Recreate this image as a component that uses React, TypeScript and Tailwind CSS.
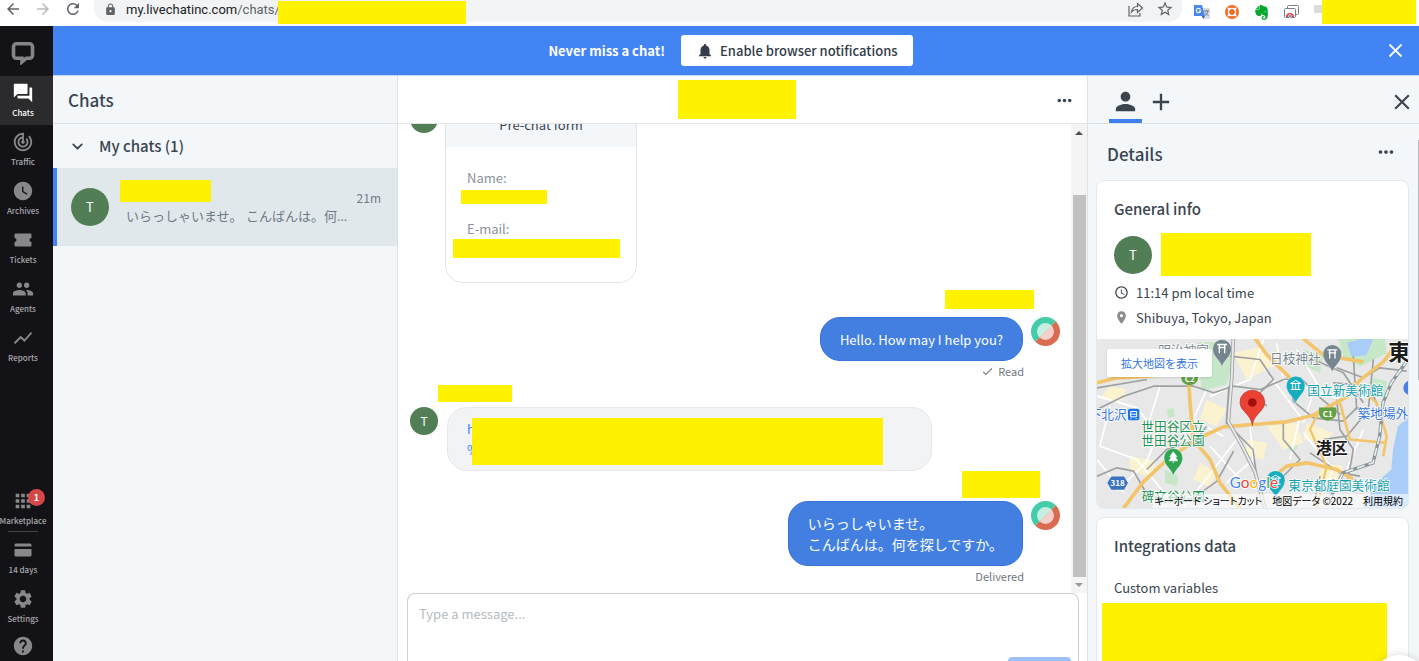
import type { ReactNode } from "react";
import type { IconType } from "react-icons";
import {
  MdAccessTime,
  MdAdd,
  MdApps,
  MdArrowBack,
  MdArrowForward,
  MdCheck,
  MdClose,
  MdForum,
  MdGroup,
  MdHelp,
  MdLocationOn,
  MdLock,
  MdMoreHoriz,
  MdNotifications,
  MdPerson,
  MdRefresh,
  MdSettings,
  MdShowChart,
  MdStarBorder,
  MdTrackChanges,
  MdWatchLater,
} from "react-icons/md";
import { SiEvernote } from "react-icons/si";
import { ChevronDown } from "lucide-react";
import clsx from "clsx";

const Redacted = ({ className }: { className: string }) => (
  <span aria-hidden="true" className={clsx("block shrink-0 bg-[#fff200]", className)} />
);

const Initial = ({ className }: { className: string }) => (
  <span
    className={clsx(
      "flex shrink-0 items-center justify-center rounded-full bg-[#517e55] text-white",
      className
    )}
  >
    T
  </span>
);

function BrowserBar() {
  return (
    <header className="flex h-[26px] shrink-0 items-start bg-white text-[#5f6368]">
      <div className="flex w-[94px] shrink-0 items-center gap-3 pl-1">
        <button type="button" aria-label="Back"><MdArrowBack size={18} /></button>
        <button type="button" aria-label="Forward" className="text-[#b9bbbe]">
          <MdArrowForward size={18} />
        </button>
        <button type="button" aria-label="Reload"><MdRefresh size={18} /></button>
      </div>
      <div className="flex h-[22px] min-w-0 flex-1 items-start rounded-b-[14px] bg-[#f1f3f4] pl-[10px]">
        <MdLock size={13} className="mt-[3px] shrink-0" />
        <p className="ml-[9px] w-[152px] shrink-0 overflow-hidden font-['Roboto',sans-serif] text-[13px] leading-[19px] whitespace-nowrap">
          <span className="text-[#202124]">my.livechatinc.com</span>/chats/
        </p>
        <Redacted className="mt-px h-[23px] w-[188px]" />
        <div className="ml-auto flex gap-3 pr-2">
          <button type="button" aria-label="Share">
            <svg width="18" height="18" viewBox="0 0 18 18" fill="none" stroke="currentColor" strokeWidth="1.2">
              <path d="M3 6v10h11v-3M5.500 12c.5-4 3-5.500 6-5.500V3.500L16.500 8l-5 4.500v-3c-2.500 0-4.500.5-6 2.500z" />
            </svg>
          </button>
          <button type="button" aria-label="Bookmark"><MdStarBorder size={18} /></button>
        </div>
      </div>
      <div className="flex shrink-0 items-center gap-[15px] pr-[3px] pl-3">
        <svg width="16" height="18" viewBox="0 0 16 18">
          <path d="M6 5h10v11H9z" fill="#dadce0" />
          <path d="M0 2h8l3 11H0z" fill="#4a86ec" />
          <path d="M8 13h3l-2 3z" fill="#2b5bc4" />
          <path d="M10 8h5M12.500 7v1M14 8c-.5 2-2 4-3 4.500M11.500 9.500c.5 1 2 2.500 3 3" stroke="#607d8b" fill="none" />
          <path d="M6.500 6.500A2.200 2.200 0 1 0 6.700 8H4.800" stroke="#fff" strokeWidth="1.100" fill="none" />
        </svg>
        <svg width="14" height="18" viewBox="0 0 14 18">
          <circle cx="7" cy="9" r="7" fill="#f26b26" />
          <circle cx="7" cy="9" r="3.600" fill="none" stroke="#fff" strokeWidth="1.300" />
          <path d="M3 5l2 2M11 5L9 7M3 13l2-2M11 13l-2-2" stroke="#fff" strokeWidth="1.800" />
          <circle cx="7" cy="9" r="2.200" fill="#f26b26" />
        </svg>
        <SiEvernote size={15} className="text-[#00a82d]" />
        <svg width="15" height="18" viewBox="0 0 15 18" fill="#fff" stroke="#7b7f83">
          <rect x="3.500" y="2.500" width="11" height="9" rx="1" />
          <rect x=".5" y="5.500" width="11" height="9" rx="1" />
          <path d="M2 14a4 4 0 0 1 8 0z" fill="#ea4335" stroke="none" />
          <circle cx="6" cy="13" r="1.500" fill="#4285f4" stroke="#fff" strokeWidth=".6" />
        </svg>
        <div className="flex">
          <span className="mt-[5px] h-2 w-2 bg-[#dcdcdc]" />
          <Redacted className="h-6 w-[94px]" />
        </div>
      </div>
    </header>
  );
}

const TicketIcon = () => (
  <svg width="18" height="18" viewBox="0 0 18 18" fill="currentColor">
    <path d="M1.500 2.500h15a1 1 0 0 1 1 1V7a2 2 0 0 0 0 4v3.500a1 1 0 0 1-1 1h-15a1 1 0 0 1-1-1V11a2 2 0 0 0 0-4V3.500a1 1 0 0 1 1-1z" />
  </svg>
);

const CardIcon = () => (
  <svg width="18" height="18" viewBox="0 0 18 18" fill="currentColor">
    <path d="M2 2.500h14a1.500 1.500 0 0 1 1.500 1.500v1.500H.5V4A1.500 1.500 0 0 1 2 2.500zM.5 8h17v6a1.500 1.500 0 0 1-1.500 1.500H2A1.500 1.500 0 0 1 .5 14z" />
  </svg>
);

function NavItem({
  label,
  icon: Icon,
  active,
  badge,
}: {
  label: string;
  icon: IconType | (() => ReactNode);
  active?: boolean;
  badge?: string;
}) {
  return (
    <a
      href="#"
      className={clsx(
        "flex h-[49px] w-full shrink-0 flex-col items-center gap-[2px] pt-[6px] pr-[7px] text-[8px] leading-[14px] font-medium whitespace-nowrap",
        active ? "bg-[#2b2b2d] text-white" : "text-[#a9a9ab]"
      )}
    >
      <span
        className={clsx(
          "relative flex size-[22px] shrink-0 items-center justify-center",
          active ? "text-white" : "text-[#88888a]"
        )}
      >
        <Icon size={22} />
        {badge && (
          <span className="absolute -top-px left-4 flex size-[17px] items-center justify-center rounded-full bg-[#d64646] text-[9px] font-bold text-white">
            {badge}
          </span>
        )}
      </span>
      {label}
    </a>
  );
}

function Sidebar() {
  return (
    <nav className="flex w-[53px] shrink-0 flex-col overflow-hidden bg-[#131217]">
      <a href="#" aria-label="LiveChat" className="flex h-[50px] shrink-0 items-center justify-center pr-[7px] pt-1">
        <svg width="24" height="24" viewBox="0 0 24 24" fill="none" stroke="#858587" strokeWidth="3.600">
          <path d="M5.500 2.800h13a3 3 0 0 1 3 3v8.500a3 3 0 0 1-3 3h-3.300l-4.200 3.500v-3.500H5.500a3 3 0 0 1-3-3V5.800a3 3 0 0 1 3-3z" />
        </svg>
      </a>
      <NavItem label="Chats" icon={MdForum} active />
      <NavItem label="Traffic" icon={MdTrackChanges} />
      <NavItem label="Archives" icon={MdWatchLater} />
      <NavItem label="Tickets" icon={TicketIcon} />
      <NavItem label="Agents" icon={MdGroup} />
      <NavItem label="Reports" icon={MdShowChart} />
      <div className="mt-auto">
        <NavItem label="Marketplace" icon={MdApps} badge="1" />
        <hr className="-mt-[2px] mb-px ml-2 w-[30px] border-[#444447]" />
        <NavItem label="14 days" icon={CardIcon} />
        <NavItem label="Settings" icon={MdSettings} />
        <a href="#" aria-label="Help" className="flex h-[30px] justify-center pt-1 pr-[7px] text-[#88888a]">
          <MdHelp size={22} />
        </a>
      </div>
    </nav>
  );
}

function Banner() {
  return (
    <div className="flex h-[50px] shrink-0 items-center border-b border-[#c3d8fd] bg-[#4384f5] pr-3 pl-6 text-white">
      <div className="flex flex-1 items-center justify-center gap-4">
        <strong className="text-[13px] leading-5 font-bold">Never miss a chat!</strong>
        <button
          type="button"
          className="flex h-[31px] items-center gap-[6px] rounded-[3px] bg-white px-[15px] text-[13px] font-medium text-[#333c48]"
        >
          <MdNotifications size={18} />
          Enable browser notifications
        </button>
      </div>
      <button type="button" aria-label="Dismiss"><MdClose size={23} /></button>
    </div>
  );
}

function ChatList() {
  return (
    <section className="flex w-[345px] shrink-0 flex-col border-r border-[#dde2e7] bg-[#f3f7fa]">
      <h1 className="flex h-12 shrink-0 items-center border-b border-[#dde2e7] pl-[15px] text-[17px] font-medium">
        Chats
      </h1>
      <button type="button" className="flex h-11 shrink-0 items-center gap-[13px] pl-4 text-[15px] font-medium">
        <ChevronDown size={17} strokeWidth={2.5} />
        My chats (1)
      </button>
      <a href="#" className="flex h-[78px] items-center border-l-4 border-[#4384f5] bg-[#e1e8eb] pr-4 pl-[14px]">
        <Initial className="size-[38px] text-[13px]" />
        <div className="ml-[11px] min-w-0 flex-1 pb-2">
          <div className="flex h-[26px] justify-between">
            <Redacted className="h-[22px] w-[91px]" />
            <time className="self-end text-xs leading-4 text-[#6f7b87]">21m</time>
          </div>
          <p className="mr-[26px] truncate pl-[6px] font-['Open_Sans','Noto_Sans_CJK_JP',sans-serif] text-[13px] leading-5 text-[#6f7b87]">
            いらっしゃいませ。 こんばんは。何を探しですか。
          </p>
        </div>
      </a>
    </section>
  );
}

const AgentAvatar = () => (
  <svg width="29" height="29" viewBox="0 0 29 29" className="shrink-0">
    <g transform="rotate(-45 14.500 14.500)">
      <path d="M0 14.500a14.500 14.500 0 0 1 29 0z" fill="#43cbaa" />
      <path d="M0 14.500a14.500 14.500 0 0 0 29 0z" fill="#d96c50" />
      <path d="M6 14.500a8.500 8.500 0 0 1 17 0z" fill="#c5efe3" />
      <path d="M6 14.500a8.500 8.500 0 0 0 17 0z" fill="#f5cfc8" />
    </g>
  </svg>
);

function AgentMessage({ name, status, children }: { name: ReactNode; status: ReactNode; children: ReactNode }) {
  return (
    <div className="flex flex-col items-end pr-[11px]">
      {name}
      <div className="flex items-start gap-2">
        <div className="rounded-[20px] border border-[#3673d6] bg-[#427fe1] px-[19px] pt-[11px] pb-[10px] leading-[21px] text-white">
          {children}
        </div>
        <AgentAvatar />
      </div>
      <p className="mt-[2px] mr-9 flex items-center gap-1 text-[11px] leading-4 text-[#6f767d]">{status}</p>
    </div>
  );
}

function Conversation() {
  return (
    <main className="flex min-w-0 flex-1 flex-col overflow-hidden bg-white">
      <div className="flex h-12 shrink-0 items-center border-b border-[#e1e5e9] pr-3">
        <div className="flex flex-1 justify-center pl-[22px]">
          <Redacted className="h-[39px] w-[118px]" />
        </div>
        <button type="button" aria-label="Chat actions" className="pt-px"><MdMoreHoriz size={21} /></button>
      </div>
      <div className="flex min-h-0 flex-1">
        <div className="flex min-w-0 flex-1 flex-col justify-end overflow-hidden pb-[9px] pl-3">
          <div className="flex items-start gap-[7px]">
            <Initial className="mt-[6px] size-7 text-xs" />
            <div className="h-[184px] w-[192px] shrink-0 overflow-hidden rounded-[18px] border border-[#e2e4e7]">
              <h2 className="bg-[#f3f7fa] pt-[15px] pb-3 text-center text-[13px] leading-5">Pre-chat form</h2>
              <dl className="px-[7px] pt-[21px] text-[13px] leading-5 text-[#8a9199]">
                <dt className="pl-[14px]">Name:</dt>
                <dd className="pt-[2px] pl-2"><Redacted className="h-[14px] w-[86px]" /></dd>
                <dt className="mt-[15px] pl-[14px]">E-mail:</dt>
                <dd><Redacted className="h-[19px] w-[167px]" /></dd>
              </dl>
            </div>
          </div>

          <div className="mt-[7px]">
            <AgentMessage
              name={<Redacted className="mr-[26px] mb-2 h-[19px] w-[89px]" />}
              status={<><MdCheck size={13} />Read</>}
            >
              <p className="text-[13px]">Hello. How may I help you?</p>
            </AgentMessage>
          </div>

          <div className="mt-[6px]">
            <Redacted className="mb-[5px] ml-7 h-[17px] w-[74px]" />
            <div className="flex items-start gap-[9px]">
              <Initial className="size-7 text-xs" />
              <div className="rounded-[20px] border border-[#e6e8ea] bg-[#f1f3f5] pt-[10px] pr-12 pb-[5px] pl-[19px]">
                <div className="flex">
                  <a href="#" className="w-[5px] overflow-hidden text-[13px] leading-[21px] text-[#4384f5]">
                    h<br />%
                  </a>
                  <Redacted className="h-[47px] w-[411px]" />
                </div>
              </div>
            </div>
          </div>

          <AgentMessage
            name={<Redacted className="mr-5 mb-[3px] h-[27px] w-[78px]" />}
            status="Delivered"
          >
            <p className="text-sm leading-[21px]">
              いらっしゃいませ。
              <br />
              こんばんは。何を探しですか。
            </p>
          </AgentMessage>
        </div>
        <div className="flex w-4 shrink-0 flex-col items-center bg-[#f4f4f4]">
          <svg width="8" height="16" viewBox="0 0 8 16" className="mb-[55px]">
            <path d="M0 11l4-4 4 4z" fill="#4f4f4f" />
          </svg>
          <div className="w-[13px] flex-1 bg-[#c1c1c1]" />
          <svg width="8" height="16" viewBox="0 0 8 16">
            <path d="M0 6l4 4 4-4z" fill="#9b9b9b" />
          </svg>
        </div>
      </div>
      <div className="flex h-[68px] shrink-0 items-start pr-2 pl-[9px]">
        <form className="flex h-[68px] flex-1 flex-col rounded-t-lg border border-b-0 border-[#c9d1d9]">
          <textarea
            aria-label="Message"
            placeholder="Type a message..."
            className="min-h-0 w-full flex-1 resize-none px-[11px] pt-[10px] text-[13px] leading-5 outline-none placeholder:text-[#b5bbc1]"
          />
          <button
            type="submit"
            aria-label="Send"
            className="mr-[7px] h-1 w-[63px] self-end rounded-t bg-[#a0c0fa]"
          />
        </form>
      </div>
    </main>
  );
}

function Pin({ x, y, color, children }: { x: number; y: number; color: string; children: ReactNode }) {
  return (
    <g transform={`translate(${x} ${y})`}>
      <path
        d="M0 54C-5 34-28 24-28 0a28 28 0 0 1 56 0C28 24 5 34 0 54z"
        fill={color}
        stroke="#fff"
        strokeOpacity=".5"
        strokeWidth="2"
      />
      <g fill="none" stroke="#fff" strokeWidth="4">{children}</g>
    </g>
  );
}

const Torii = () => <path d="M-15-13h30M-11-4h22M-8-13v26M8-13v26" />;
const Museum = () => <path d="M-15-6L0-15l15 9zM-9-4v14M0-4v14M9-4v14M-15 12h30" strokeWidth="3" />;

function LocationMap() {
  return (
    <div className="relative h-[169px] overflow-hidden">
      <svg
        viewBox="21 27 933 510"
        preserveAspectRatio="xMidYMid slice"
        className="size-full font-['Noto_Sans_CJK_JP',sans-serif]"
      >
        <rect x="0" y="0" width="1000" height="560" fill="#e8e8e8" />
        <path d="M320 40l90-5 20 60-20 70-75 20zM745 27h140l5 45-80 40-50-30zM640 60l60 20-10 50-50-20zM845 145l45 10-5 50-50-10zM225 420l40 20-5 30-35-10zM595 350l30-10-5 20-20 5zM230 240l20-5 5 25-20 5z" fill="#c7e8c8" />
        <path d="M954 265l-30 25-15 70-5 60-45 40-40 75h135zM770 40l50-13h30l-20 50-45 5z" fill="#a9cdf8" />
        <path d="M60 170l50 10-20 40-60-15zM350 210l60 30-30 50-50-20zM430 70l90-20 30 60-80 40zM470 330l60 10-10 50-55-15zM120 380l80 15-20 50-60-25zM530 290l90-10 20 60-60 20zM650 280l80 30-30 30-60-10zM700 400l60 10-30 60-50-20zM330 400l50 30-20 40-50-20z" fill="#fbf2cf" />
        <g fill="none" stroke="#fff" strokeWidth="5">
          <path d="M21 200l120 35 60 80-30 80-90 90M60 230l-30 120 110 40 100 120M210 170l-40 130M350 180l-40 90 90 50M440 330l-100 130-60 70M480 290l10 100-80 70M540 140l90 120-30 130M620 60l60 100-40 120M640 310l90 110-40 90M820 300l-50 120M520 30l-40 120-120 50M560 40l20 110 170 60M360 350l90 100M21 390l80 100" />
        </g>
        <g fill="none" stroke="#9fa0a2" strokeWidth="5" strokeLinejoin="round">
          <path d="M21 240l80-40 90-30h120l60 20 60-20 80 10 70-30 50-5 60 60 60 50" />
          <path d="M21 440l60-25 50 10 40 70 60 20 80-10 70-50 50-90M350 290l-30 40-90 30-60 60" />
          <path d="M417 170l-8 110 80 80 15 110M530 230l-30-30 50-50-40-60-90-10M580 280v50l50 60-60 60-80 10" />
          <path d="M600 145l10 70 60 50 90 10 40-40 60 10M740 210l10 90 40 60-20 110M820 220l-60-90-90-40M660 370l90 60 60 10M690 440l-20 90" />
          <path d="M740 115l80 30 50-30 80 10M730 160l110 10 30 80M790 80l10 160M850 90l-15 150M700 330l70-10 50-60M21 175l150-25" />
        </g>
        <g fill="none" stroke="#f3c56b" strokeWidth="11" strokeLinejoin="round">
          <path d="M100 537l60-80 75-70 90-60 75-35 190-15 80-20 100-55 40-50 70-55 50-65" />
          <path d="M21 160l60-15 90-5 120-10M295 130l5 90 10 110 50 60 30 70 60 77" />
          <path d="M600 145l-70-70-35-48M640 27l60 50 120 20M530 460l60-50 60-10 90 20 50 30" />
          <path d="M750 220l30 110 110 10M790 160l70 60 30 100-10 60" strokeWidth="8" />
          <path d="M690 240l-30 60 50 110-30 127" strokeWidth="7" />
        </g>
        <path d="M430 27l-5 120-10 130 40 70 40 80 30 110" fill="none" stroke="#999b9d" strokeWidth="11" />
        <path d="M430 27l-5 120-10 130 40 70 40 80 30 110" fill="none" stroke="#e9e9e9" strokeWidth="6" />
        <path d="M954 90l-50 70-25 60-10 100-20 80-90 30-40 80" fill="none" stroke="#8b9396" strokeWidth="10" />
        <path d="M954 90l-50 70-25 60-10 100-20 80-90 30-40 80" fill="none" stroke="#e2f2f3" strokeWidth="5" strokeDasharray="24 12" />

        <g fontSize="38" stroke="#fff" strokeWidth="5" paintOrder="stroke" strokeLinejoin="round">
          <text x="205" y="76" fill="#78858f">明治神宮</text>
          <text x="540" y="100" fill="#78858f">日枝神社</text>
          <text x="652" y="195" fill="#129fad">国立新美術館</text>
          <text x="595" y="480" fill="#129fad">東京都庭園美術館</text>
          <text x="803" y="264" fill="#3475de">築地場外</text>
          <text x="-4" y="267" fill="#3475de">下北沢</text>
          <text x="154" y="305" fill="#219150">世田谷区立</text>
          <text x="154" y="345" fill="#219150">世田谷公園</text>
          <text x="155" y="515" fill="#219150">碑文谷公園</text>
          <text x="677" y="372" fontSize="48" fontWeight="700" fill="#1b1b1b">港区</text>
          <text x="895" y="90" fontSize="66" fontWeight="700" fill="#1b1b1b">東</text>
        </g>

        <path d="M274 130h50v16c0 14-16 20-25 22-9-2-25-8-25-22zM687 234h52v16c0 16-16 22-26 24-10-2-26-8-26-24z" fill="#66a044" />
        <path d="M64 441h38l12 19-12 21H64l-12-21z" fill="#3b73c2" />
        <g fill="#fff" fontSize="24" fontWeight="700" textAnchor="middle">
          <text x="299" y="158">C2</text>
          <text x="713" y="261">C1</text>
          <text x="83" y="469">318</text>
        </g>
        <rect x="114" y="238" width="34" height="34" rx="5" fill="#1a73e8" />
        <path d="M122 246h18v16h-18zM122 254h18M124 266l-2 3M138 266l2 3" fill="none" stroke="#fff" strokeWidth="3" />
        <circle cx="962" cy="175" r="22" fill="#4a7fe6" />

        <Pin x={396} y={58} color="#75868f"><Torii /></Pin>
        <Pin x={727} y={74} color="#75868f"><Torii /></Pin>
        <Pin x={617} y={168} color="#16adc0"><Museum /></Pin>
        <Pin x={557} y={452} color="#16adc0"><Museum /></Pin>
        <Pin x={250} y={385} color="#30a453">
          <path d="M0-18l11 15h-6l8 12h-26l8-12h-6zM0 8v8" fill="#fff" strokeWidth="2" />
        </Pin>
        <text
          x="419"
          y="476"
          fontFamily="Lato"
          fontSize="46"
          stroke="#fff"
          strokeWidth="5"
          paintOrder="stroke"
        >
          <tspan fill="#4285f4">G</tspan>
          <tspan fill="#ea4335">o</tspan>
          <tspan fill="#fbbc05">o</tspan>
          <tspan fill="#4285f4">g</tspan>
          <tspan fill="#34a853">l</tspan>
          <tspan fill="#ea4335">e</tspan>
        </text>
        <path d="M487 288c-4-36-37-42-37-70a37 36 0 0 1 74 0c0 28-33 34-37 70z" fill="#ea4335" stroke="#b8352c" strokeWidth="2" />
        <circle cx="487" cy="219" r="13" fill="#a50e0e" />
      </svg>
      <a
        href="#"
        className="absolute top-[10px] left-[10px] flex h-[28px] items-center rounded-[2px] bg-white px-[14px] text-[11px] text-[#3475de] shadow"
      >
        拡大地図を表示
      </a>
      <div className="absolute right-0 bottom-0 flex gap-[10px] bg-white/60 pr-[5px] pl-px text-[10px] leading-[14px] whitespace-nowrap text-black [font-feature-settings:'palt']">
        <button type="button">キーボード ショートカット</button>
        <span>地図データ ©2022</span>
        <a href="#">利用規約</a>
      </div>
    </div>
  );
}

function DetailsPanel() {
  return (
    <aside className="relative flex w-[332px] shrink-0 flex-col overflow-hidden border-l border-[#dde2e7] bg-[#f3f7fa]">
      <div className="flex h-12 shrink-0 border-b border-[#dde2e7] pr-1 pl-[21px]">
        <button
          type="button"
          aria-label="Customer details"
          className="flex w-[33px] items-center justify-center border-b-4 border-[#3c80f0] pt-2"
        >
          <MdPerson size={29} />
        </button>
        <button type="button" aria-label="Add app" className="ml-[5px] pt-1"><MdAdd size={28} /></button>
        <button type="button" aria-label="Close details" className="ml-auto pt-1"><MdClose size={26} /></button>
      </div>
      <div className="flex min-h-0 flex-1">
        <div className="min-w-0 flex-1 pr-[9px] pl-2">
          <div className="flex h-14 items-center justify-between pr-3 pl-[11px]">
            <h2 className="pt-1 text-[17px] font-medium">Details</h2>
            <button type="button" aria-label="Details actions"><MdMoreHoriz size={22} /></button>
          </div>
          <section className="overflow-hidden rounded-lg border border-[#e4e9ed] bg-white">
            <div className="pr-4 pl-[17px]">
              <h3 className="pt-[18px] text-[15px] leading-5 font-medium">General info</h3>
              <div className="mt-[14px] flex items-center gap-[9px]">
                <Initial className="size-[38px] text-[13px]" />
                <Redacted className="h-[43px] w-[150px]" />
              </div>
              <ul className="pt-1 pb-[9px] text-[13px] leading-[25px]">
                <li className="flex items-center gap-[7px]"><MdAccessTime size={15} />11:14 pm local time</li>
                <li className="flex items-center gap-[7px]">
                  <MdLocationOn size={15} className="text-[#8c8c8f]" />
                  Shibuya, Tokyo, Japan
                </li>
              </ul>
            </div>
            <LocationMap />
          </section>
          <section className="mt-2 rounded-lg border border-[#e4e9ed] bg-white pt-[18px]">
            <h3 className="pr-4 pl-[17px] text-[15px] leading-5 font-medium">Integrations data</h3>
            <h4 className="mt-[22px] pr-4 pl-[17px] text-[13px] leading-5">Custom variables</h4>
            <Redacted className="mt-[5px] ml-[5px] h-24 w-[285px]" />
          </section>
        </div>
        <div className="w-px shrink-0 pt-4">
          <div className="h-[240px] bg-[#b9bdc1]" />
        </div>
      </div>
      <button
        type="button"
        aria-label="Open help chat"
        className="absolute right-[-8px] -bottom-[50px] size-14 rounded-full bg-white shadow-[0_0_8px_rgba(0,0,0,0.15)]"
      />
    </aside>
  );
}

export default function App() {
  return (
    <div className="flex h-screen flex-col overflow-hidden bg-white font-['Noto_Sans_CJK_JP',sans-serif] text-[#3a4550]">
      <BrowserBar />
      <div className="flex min-h-0 flex-1">
        <Sidebar />
        <div className="flex min-w-0 flex-1 flex-col">
          <Banner />
          <div className="flex min-h-0 flex-1">
            <ChatList />
            <Conversation />
            <DetailsPanel />
          </div>
        </div>
      </div>
    </div>
  );
}
